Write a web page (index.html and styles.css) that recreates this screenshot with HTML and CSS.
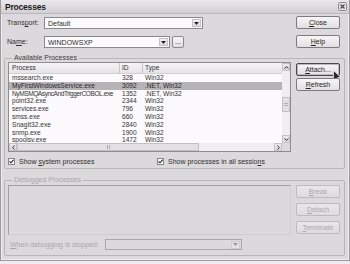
FILE: index.html
```html
<!DOCTYPE html>
<html>
<head>
<meta charset="utf-8">
<title>Processes</title>
<link rel="stylesheet" href="styles.css">
</head>
<body>
<div class="window">
  <div class="titlebar">
    <span class="title">Processes</span>
    <svg class="close-x" width="9" height="9" viewBox="0 0 9 9"><rect x="0.5" y="0.5" width="8" height="8" rx="1" fill="#e6e3e6" stroke="#8a878a"/><path d="M2.5 2.5 L6.5 6.5 M6.5 2.5 L2.5 6.5" stroke="#4a474a" stroke-width="1.2"/></svg>
  </div>
  <div class="content">
    <div class="top">
      <div class="fields">
        <div class="field">
          <span class="lbl">Trans<u>p</u>ort:</span>
          <div class="combo wide"><span>Default</span><span class="drop"><svg width="5" height="3" viewBox="0 0 5 3"><path d="M0 0 H5 L2.5 3 Z" fill="#222"/></svg></span></div>
        </div>
        <div class="field">
          <span class="lbl">Na<u>m</u>e:</span>
          <div class="combo narrow"><span>WINDOWSXP</span><span class="drop"><svg width="5" height="3" viewBox="0 0 5 3"><path d="M0 0 H5 L2.5 3 Z" fill="#222"/></svg></span></div>
          <button class="btn dots">...</button>
        </div>
      </div>
      <div class="btn-col top-btns">
        <button class="btn"><u>C</u>lose</button>
        <button class="btn"><u>H</u>elp</button>
      </div>
    </div>

    <fieldset class="group">
      <legend>Available Processes</legend>
      <div class="group-main">
        <div class="listbox">
          <div class="listview">
            <div class="lv-row lv-head"><span>Process</span><span>ID</span><span>Type</span></div>
            <div class="lv-row"><span>mssearch.exe</span><span>328</span><span>Win32</span></div>
            <div class="lv-row sel"><span>MyFirstWindowsService.exe</span><span>3092</span><span>.NET, Win32</span></div>
            <div class="lv-row"><span class="tight">NyMSMQAsyncAndTriggerCOBOL.exe</span><span>1352</span><span>.NET, Win32</span></div>
            <div class="lv-row"><span>point32.exe</span><span>2344</span><span>Win32</span></div>
            <div class="lv-row"><span>services.exe</span><span>796</span><span>Win32</span></div>
            <div class="lv-row"><span>smss.exe</span><span>660</span><span>Win32</span></div>
            <div class="lv-row"><span>SnagIt32.exe</span><span>2840</span><span>Win32</span></div>
            <div class="lv-row"><span>snmp.exe</span><span>1900</span><span>Win32</span></div>
            <div class="lv-row"><span>spoolsv.exe</span><span>1472</span><span>Win32</span></div>
          </div>
          <div class="vscroll">
            <span class="sb-btn"><svg width="5" height="3" viewBox="0 0 5 3"><path d="M0.5 2.5 L2.5 0.7 L4.5 2.5" fill="none" stroke="#333" stroke-width="1"/></svg></span>
            <span class="sb-track vtop"></span>
            <span class="sb-thumb vthumb"><i></i></span>
            <span class="sb-track fill"></span>
            <span class="sb-btn"><svg width="5" height="3" viewBox="0 0 5 3"><path d="M0.5 0.5 L2.5 2.3 L4.5 0.5" fill="none" stroke="#333" stroke-width="1"/></svg></span>
          </div>
          <div class="hscroll">
            <span class="sb-btn"><svg width="3" height="5" viewBox="0 0 3 5"><path d="M2.5 0.5 L0.7 2.5 L2.5 4.5" fill="none" stroke="#333" stroke-width="1"/></svg></span>
            <span class="sb-thumb hthumb"><i></i></span>
            <span class="sb-track fill"></span>
            <span class="sb-btn"><svg width="3" height="5" viewBox="0 0 3 5"><path d="M0.5 0.5 L2.3 2.5 L0.5 4.5" fill="none" stroke="#333" stroke-width="1"/></svg></span>
          </div>
          <div class="corner"></div>
        </div>
        <div class="btn-col side-btns">
          <button class="btn default"><u>A</u>ttach...
            <svg class="cursor" width="9" height="13" viewBox="0 0 9 13"><path d="M0.5 0.5 L0.5 10.5 L3 8 L4.8 12 L6.4 11.3 L4.7 7.5 L8 7.5 Z" fill="#2b2b2b" stroke="#f4f4f4" stroke-width="0.7" stroke-linejoin="round"/></svg>
          </button>
          <button class="btn refresh"><u>R</u>efresh</button>
        </div>
      </div>
      <div class="checks">
        <span class="check first"><span class="box"><svg width="5" height="5" viewBox="0 0 5 5"><path d="M0.5 2.3 L2 3.8 L4.6 0.8" fill="none" stroke="#222" stroke-width="1.1"/></svg></span><span class="ctext">Show <u>s</u>ystem processes</span></span>
        <span class="check second"><span class="box"><svg width="5" height="5" viewBox="0 0 5 5"><path d="M0.5 2.3 L2 3.8 L4.6 0.8" fill="none" stroke="#222" stroke-width="1.1"/></svg></span><span class="ctext">Show processes in all sessio<u>n</u>s</span></span>
      </div>
    </fieldset>

    <fieldset class="group disabled">
      <legend>Debugged Processes</legend>
      <div class="group-main">
        <div class="listbox dim"></div>
        <div class="btn-col side-btns2">
          <button class="btn off"><u>B</u>reak</button>
          <button class="btn off"><u>D</u>etach</button>
          <button class="btn off"><u>T</u>erminate</button>
        </div>
      </div>
      <div class="when">
        <span class="when-lbl"><u>W</u>hen debugging is stopped:</span>
        <div class="combo dimcombo"><span></span><span class="drop"><svg width="5" height="3" viewBox="0 0 5 3"><path d="M0 0 H5 L2.5 3 Z" fill="#9a979a"/></svg></span></div>
      </div>
    </fieldset>
  </div>
</div>
</body>
</html>
```

FILE: styles.css
```css
html, body {
  margin: 0;
  padding: 0;
  background: #eeecee;
}

.window {
  width: 350px;
  height: 261px;
  box-sizing: border-box;
  background: #dcd9dc;
  border: 1px solid #9c999c;
  border-top: none;
  box-shadow: inset 1px 0 #efedef, inset -1px 0 #efedef, inset 0 -1px #efedef;
  display: flex;
  flex-direction: column;
  font-family: "Liberation Sans", Arial, sans-serif;
  font-size: 7px;
  color: #2e2e2e;
}

.titlebar {
  height: 14px;
  flex: none;
  box-sizing: border-box;
  display: flex;
  align-items: center;
  justify-content: space-between;
  padding: 0 2px 0 4px;
  background: linear-gradient(#ebe8eb, #d3d0d3);
  border-bottom: 1px solid #bcb9bc;
}

.title {
  font-weight: bold;
  font-size: 8.5px;
  letter-spacing: -0.2px;
  color: #1a1a1a;
}

.close-x { display: block; }

.content {
  flex: 1;
  display: flex;
  flex-direction: column;
  padding: 2px 4px 0 3px;
}

.top {
  display: flex;
  justify-content: space-between;
}

.fields {
  display: flex;
  flex-direction: column;
  gap: 6px;
  padding-left: 3px;
}

.field {
  display: flex;
  align-items: center;
  height: 13px;
}

.lbl {
  width: 37px;
  flex: none;
}

.combo {
  height: 12px;
  margin-top: 1px;
  box-sizing: border-box;
  border: 1px solid #8c898c;
  background: #fcfbfc;
  display: flex;
  align-items: center;
  padding-left: 3px;
  padding-right: 1px;
}

.combo.wide { width: 159px; }
.combo.narrow { width: 126px; }

.drop {
  margin-left: auto;
  width: 9px;
  height: 8px;
  box-sizing: border-box;
  border: 1px solid #c4c1c4;
  background: linear-gradient(#f4f2f4, #dedbde);
  display: flex;
  align-items: center;
  justify-content: center;
}

.drop svg { display: block; }

.btn {
  width: 44px;
  height: 13px;
  box-sizing: border-box;
  border: 1px solid #7e7b7e;
  border-radius: 2px;
  background: linear-gradient(#f7f5f7, #e2dfe2);
  font-family: inherit;
  font-size: 7px;
  color: #262626;
  padding: 0;
  line-height: 11px;
  text-align: center;
  position: relative;
}

.btn.dots {
  width: 12px;
  height: 12px;
  margin-top: 1px;
  margin-left: 2px;
  line-height: 8px;
  border-color: #8c898c;
}

.btn-col {
  display: flex;
  flex-direction: column;
  flex: none;
}

.top-btns {
  gap: 6px;
  margin-right: 5px;
}

.group {
  margin: 6px 0 0 0;
  padding: 0 4px 3px 3px;
  border: 1px solid #b9b6b9;
  border-radius: 2px;
  min-width: 0;
}

.group legend {
  padding: 0 2px;
  margin-left: 4px;
  line-height: 8px;
  font-size: 7px;
  color: #3a3a3a;
}

.group-main {
  display: flex;
  gap: 5px;
}

.listbox {
  width: 283px;
  height: 90px;
  box-sizing: border-box;
  border: 1px solid #8f8c8f;
  background: #fcfafc;
  display: grid;
  grid-template-columns: 1fr 8px;
  grid-template-rows: 1fr 8px;
  flex: none;
}

.listview {
  overflow: hidden;
  min-width: 0;
  min-height: 0;
}

.lv-row {
  display: grid;
  grid-template-columns: 111px 23px 1fr;
  height: 7.8px;
  line-height: 7.8px;
  font-size: 6.6px;
  white-space: nowrap;
  color: #333;
}

.lv-row span { padding-left: 2px; }
.lv-row span:first-child { padding-left: 3px; }
.lv-row span.tight { letter-spacing: -0.45px; }

.lv-head {
  height: 10px;
  line-height: 10px;
  border-bottom: 1px solid #d2cfd2;
  background: linear-gradient(#f6f4f6, #e6e3e6);
}

.lv-head span { border-right: 1px solid #c9c6c9; }
.lv-head span:last-child { border-right: none; }

.lv-row.sel { background: #b6b3b6; color: #262626; }

.vscroll {
  display: flex;
  flex-direction: column;
  background: #f0eef0;
}

.hscroll {
  display: flex;
  background: #f0eef0;
}

.corner { background: #dcd9dc; }

.sb-btn {
  width: 8px;
  height: 8px;
  flex: none;
  box-sizing: border-box;
  border: 1px solid #c6c3c6;
  background: linear-gradient(#eceaec, #d8d5d8);
  display: flex;
  align-items: center;
  justify-content: center;
}

.sb-btn svg { display: block; }

.sb-track.vtop { height: 26px; flex: none; }
.sb-track.fill { flex: 1; }

.sb-thumb {
  box-sizing: border-box;
  border: 1px solid #c3c0c3;
  background: #e3e0e3;
  display: flex;
  align-items: center;
  justify-content: center;
  flex: none;
}

.vthumb { width: 8px; height: 15px; }
.vthumb i { width: 4px; height: 3px; border-top: 1px solid #b0adb0; border-bottom: 1px solid #b0adb0; box-sizing: border-box; }

.hthumb { height: 8px; width: 182px; }
.hthumb i { width: 3px; height: 4px; border-left: 1px solid #b0adb0; border-right: 1px solid #b0adb0; box-sizing: border-box; }

.side-btns { padding-top: 1px; gap: 2px; }

.btn.default {
  border-color: #4c494c;
  box-shadow: inset 0 0 0 1px #bdbabd;
}

.cursor {
  position: absolute;
  left: 36px;
  top: 6px;
  display: block;
}

.checks {
  display: flex;
  margin-top: 5px;
  height: 8px;
  align-items: center;
}

.check {
  display: flex;
  align-items: center;
  gap: 4px;
}

.check.first { width: 149px; }

.box {
  width: 7px;
  height: 7px;
  flex: none;
  box-sizing: border-box;
  border: 1px solid #8a878a;
  background: #fbfafb;
  display: flex;
  align-items: center;
  justify-content: center;
}

.box svg { display: block; }

.ctext { white-space: nowrap; }

.group.disabled {
  margin-top: 7px;
  padding-bottom: 5px;
}

.group.disabled legend { color: #a9a6a9; }

.listbox.dim {
  height: 50px;
  margin-top: 1px;
  background: #dcd9dc;
  border-color: #a3a0a3;
  border-right-color: #d0cdd0;
  border-bottom-color: #d0cdd0;
  display: block;
}

.side-btns2 { gap: 5px; padding-top: 1px; }

.btn.off {
  color: #aaa7aa;
  border-color: #bdbabd;
  background: linear-gradient(#eae7ea, #dedbde);
}

.when {
  display: flex;
  align-items: center;
  margin-top: 4px;
  height: 11px;
  color: #a9a6a9;
}

.when-lbl { width: 95px; padding-left: 2px; flex: none; }

.combo.dimcombo {
  width: 137px;
  height: 11px;
  margin-top: 0;
  background: #dcd9dc;
  border-color: #a9a6a9;
}

.dimcombo .drop { border-color: #cfcccf; background: #e4e1e4; }
```
